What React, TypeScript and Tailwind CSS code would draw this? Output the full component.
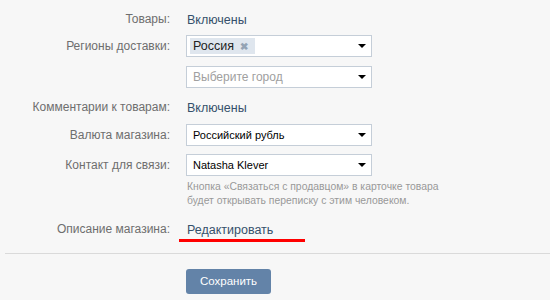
import { ReactNode } from 'react'

function Arrow() {
    return (
        <svg width="8" height="4" viewBox="0 0 8 4" className="shrink-0">
            <path d="M0 0 L8 0 L4 4 Z" fill="#000" />
        </svg>
    )
}

function Select({ children }: { children: ReactNode }) {
    return (
        <div className="flex items-center justify-between w-[186px] h-[22px] bg-white border border-[#c5ced8] pl-[6px] pr-[5px]">
            {children}
            <Arrow />
        </div>
    )
}

function Row({ label, children, className = '' }: { label: string; children: ReactNode; className?: string }) {
    return (
        <div className={`flex items-center ${className}`}>
            <div className="w-[171px] text-right text-[12px] text-[#6e6e6e] pr-[1px]">{label}</div>
            <div className="ml-[15px]">{children}</div>
        </div>
    )
}

export default function App() {
    return (
        <div
            className="w-[550px] h-[300px] bg-[#f7f7f7] overflow-hidden"
            style={{ fontFamily: '"Liberation Sans", Arial, sans-serif' }}
        >
            <div className="pt-[8px]">
                {/* ── товары ── */}
                <Row label="Товары:" className="h-[21px]">
                    <span className="text-[12.5px] text-[#35506b] pl-[1px]">Включены</span>
                </Row>

                {/* ── регионы ── */}
                <Row label="Регионы доставки:" className="mt-[6px] h-[22px]">
                    <Select>
                        <span className="flex items-center h-[16px] bg-[#dfe6ee] pl-[3px] pr-[7px] -ml-[3px] text-[12.5px] text-[#222]">
                            Россия
                            <span className="ml-[6px] text-[10px] font-bold text-[#94a3b4]">✖</span>
                        </span>
                    </Select>
                </Row>
                <Row label="" className="mt-[9px] h-[22px]">
                    <Select>
                        <span className="text-[12px] text-[#a0a0a0]">Выберите город</span>
                    </Select>
                </Row>

                {/* ── комментарии ── */}
                <Row label="Комментарии к товарам:" className="mt-[8px] h-[21px]">
                    <span className="text-[12.5px] text-[#35506b] pl-[1px]">Включены</span>
                </Row>

                {/* ── валюта / контакт ── */}
                <Row label="Валюта магазина:" className="mt-[7px] h-[22px]">
                    <Select>
                        <span className="text-[11px] text-black">Российский рубль</span>
                    </Select>
                </Row>
                <Row label="Контакт для связи:" className="mt-[8px] h-[22px]">
                    <Select>
                        <span className="text-[11px] text-black">Natasha Klever</span>
                    </Select>
                </Row>
                <div className="ml-[187px] mt-[4px] text-[10.4px] leading-[14px] text-[#999]">
                    Кнопка «Связаться с продавцом» в карточке товара
                    <br />
                    будет открывать переписку с этим человеком.
                </div>

                {/* ── описание ── */}
                <Row label="Описание магазина:" className="mt-[10px] h-[21px]">
                    <div className="relative">
                        <span className="text-[12.5px] text-[#35506b] pl-[1px]">Редактировать</span>
                        <div className="absolute left-[-7px] top-[22px] w-[126px] h-[3px] bg-[#ff0000]" />
                    </div>
                </Row>
            </div>

            <div className="ml-[5px] mt-[14px] h-px bg-[#dadada]" />

            <div className="ml-[186px] mt-[14px]">
                <button className="w-[85px] h-[25px] rounded-[3px] bg-[#6383a8] text-white text-[11.5px]">
                    Сохранить
                </button>
            </div>
        </div>
    )
}
